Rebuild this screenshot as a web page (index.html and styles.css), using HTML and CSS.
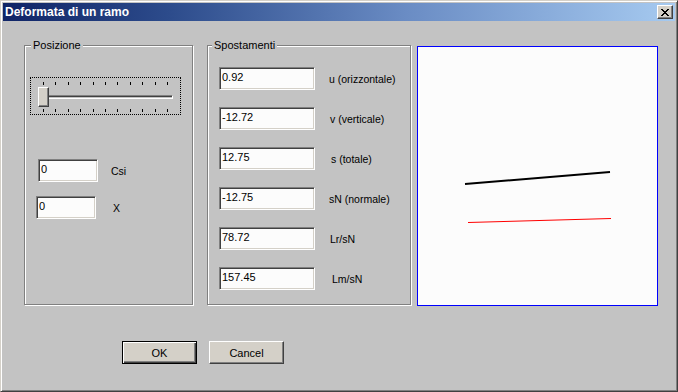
FILE: index.html
```html
<!DOCTYPE html>
<html lang="it">
<head>
    <meta charset="UTF-8">
    <title>Deformata di un ramo</title>
    <link rel="stylesheet" href="styles.css">
</head>
<body>

<div class="window">
    <div class="titlebar">
        <span class="title">Deformata di un ramo</span>
        <button class="close-btn" type="button">
            <svg width="8" height="7" viewBox="0 0 8 7" shape-rendering="crispEdges">
                <path d="M0 0h2v1h-2zM6 0h2v1h-2zM1 1h2v1h-2zM5 1h2v1h-2zM2 2h4v1h-4zM3 3h2v1h-2zM2 4h4v1h-4zM1 5h2v1h-2zM5 5h2v1h-2zM0 6h2v1h-2zM6 6h2v1h-2z" fill="#000"/>
            </svg>
        </button>
    </div>

    <div class="main">
        <div class="group group-pos">
            <span class="legend">Posizione</span>

            <div class="slider">
                <div class="ticks ticks-top">
                    <span></span><span></span><span></span><span></span><span></span><span></span>
                    <span></span><span></span><span></span><span></span><span></span>
                </div>
                <div class="track"></div>
                <div class="thumb"></div>
                <div class="ticks ticks-bottom">
                    <span></span><span></span><span></span><span></span><span></span><span></span>
                    <span></span><span></span><span></span><span></span><span></span>
                </div>
            </div>

            <div class="pos-row pos-csi">
                <input class="edit edit-small" type="text" value="0">
                <span class="lbl">Csi</span>
            </div>
            <div class="pos-row pos-x">
                <input class="edit edit-small" type="text" value="0">
                <span class="lbl">X</span>
            </div>
        </div>

        <div class="group group-spost">
            <span class="legend">Spostamenti</span>
            <div class="rows">
                <div class="row"><input class="edit" type="text" value="0.92"><span class="lbl">u (orizzontale)</span></div>
                <div class="row"><input class="edit" type="text" value="-12.72"><span class="lbl l1">v (verticale)</span></div>
                <div class="row"><input class="edit" type="text" value="12.75"><span class="lbl l2">s (totale)</span></div>
                <div class="row"><input class="edit" type="text" value="-12.75"><span class="lbl">sN (normale)</span></div>
                <div class="row"><input class="edit" type="text" value="78.72"><span class="lbl l1">Lr/sN</span></div>
                <div class="row last"><input class="edit" type="text" value="157.45"><span class="lbl l3">Lm/sN</span></div>
            </div>
        </div>

        <div class="canvas">
            <svg width="239" height="258" viewBox="0 0 239 258">
                <line x1="47" y1="137" x2="192" y2="125" stroke="#000" stroke-width="2"/>
                <line x1="50" y1="175.5" x2="193" y2="171.5" stroke="#ff0000" stroke-width="1"/>
            </svg>
        </div>
    </div>

    <div class="buttons">
        <button class="btn btn-default" type="button">OK</button>
        <button class="btn" type="button">Cancel</button>
    </div>
</div>

</body>
</html>
```

FILE: styles.css
```css
body {
    margin: 0;
    background-color: #c3c3c3;
    font-family: "Liberation Sans", Arial, sans-serif;
    font-size: 11px;
    color: #000;
}
.window {
    width: 678px;
    height: 392px;
    box-sizing: border-box;
    padding: 2px;
    background-color: #c3c3c3;
    border: 1px solid;
    border-color: #d4d0c8 #404040 #404040 #d4d0c8;
    box-shadow: inset 1px 1px #fff, inset -1px -1px #808080;
}
.titlebar {
    height: 18px;
    display: flex;
    align-items: center;
    justify-content: space-between;
    padding: 0 2px 0 2px;
    background: linear-gradient(to right, #0f2466, #2d4c8c 25%, #6a8cc4 60%, #a6caf0);
}
.title {
    color: #fff;
    font-weight: bold;
    font-size: 12px;
}
.close-btn {
    width: 16px;
    height: 14px;
    padding: 0;
    margin: 0;
    display: flex;
    align-items: center;
    justify-content: center;
    background-color: #d4d0c8;
    border: 1px solid;
    border-color: #fff #404040 #404040 #fff;
    box-shadow: inset -1px -1px #808080;
}
.main {
    display: flex;
    align-items: flex-start;
    margin-top: 24px;
    padding-left: 21px;
}
.group {
    position: relative;
    box-sizing: border-box;
    height: 260px;
    border: 1px solid #808080;
    box-shadow: 1px 1px #fff, inset 1px 1px #fff;
}
.group-pos {
    width: 169px;
    margin-right: 14px;
}
.group-spost {
    width: 204px;
    margin-right: 6px;
}
.legend {
    position: absolute;
    top: -7px;
    left: 6px;
    padding: 0 2px;
    background-color: #c3c3c3;
    line-height: 13px;
}
.group-spost .legend {
    left: 4px;
}
.lbl {
    font-size: 10.5px;
}
.slider {
    position: relative;
    width: 151px;
    height: 38px;
    box-sizing: border-box;
    margin: 31px 0 0 5px;
    border: 1px dotted #000;
}
.ticks {
    position: absolute;
    left: 12px;
    width: 125px;
    height: 3px;
    display: flex;
    justify-content: space-between;
}
.ticks span {
    width: 1px;
    height: 3px;
    background-color: #000;
}
.ticks-top {
    top: 4px;
}
.ticks-bottom {
    top: 31px;
}
.track {
    position: absolute;
    left: 7px;
    top: 17px;
    width: 135px;
    height: 4px;
    box-sizing: border-box;
    border: 1px solid;
    border-color: #808080 #fff #fff #808080;
    box-shadow: inset 1px 1px #404040;
}
.thumb {
    position: absolute;
    left: 7px;
    top: 9px;
    width: 11px;
    height: 20px;
    box-sizing: border-box;
    background-color: #d4d0c8;
    border: 1px solid;
    border-color: #fff #404040 #404040 #fff;
    box-shadow: inset -1px -1px #808080;
}
.pos-row {
    display: flex;
    align-items: center;
}
.pos-csi {
    margin: 44px 0 0 13px;
}
.pos-csi .lbl {
    margin-left: 13px;
}
.pos-x {
    margin: 14px 0 0 11px;
}
.pos-x .lbl {
    margin-left: 17px;
}
.edit {
    width: 96px;
    height: 23px;
    box-sizing: border-box;
    margin: 0;
    padding: 0 0 3px 2px;
    font-family: "Liberation Sans", Arial, sans-serif;
    font-size: 11px;
    color: #000;
    background-color: #fcfcfc;
    border: 1px solid;
    border-color: #808080 #fff #fff #808080;
    box-shadow: inset 1px 1px #404040, inset -1px -1px #d4d0c8;
    outline: none;
}
.edit-small {
    width: 60px;
}
.rows {
    display: flex;
    flex-direction: column;
    gap: 17px;
    margin: 21px 0 0 11px;
}
.row {
    display: flex;
    align-items: center;
}
.row .lbl {
    margin-left: 14px;
}
.row .lbl.l1 {
    margin-left: 15px;
}
.row .lbl.l2 {
    margin-left: 16px;
}
.row .lbl.l3 {
    margin-left: 17px;
}
.canvas {
    width: 241px;
    height: 260px;
    box-sizing: border-box;
    margin-top: 1px;
    border: 1px solid #0000ff;
    background-color: #fcfcfc;
}
.canvas svg {
    display: block;
}
.buttons {
    display: flex;
    gap: 12px;
    margin-top: 35px;
    padding-left: 119px;
}
.btn {
    width: 75px;
    height: 23px;
    box-sizing: border-box;
    padding: 0;
    font-family: "Liberation Sans", Arial, sans-serif;
    font-size: 11px;
    color: #000;
    background-color: #d4d0c8;
    border: 1px solid;
    border-color: #fff #404040 #404040 #fff;
    box-shadow: inset -1px -1px #808080;
}
.btn-default {
    border: 1px solid #000;
    box-shadow: inset 1px 1px #fff, inset -1px -1px #404040, inset -2px -2px #808080;
}
```
